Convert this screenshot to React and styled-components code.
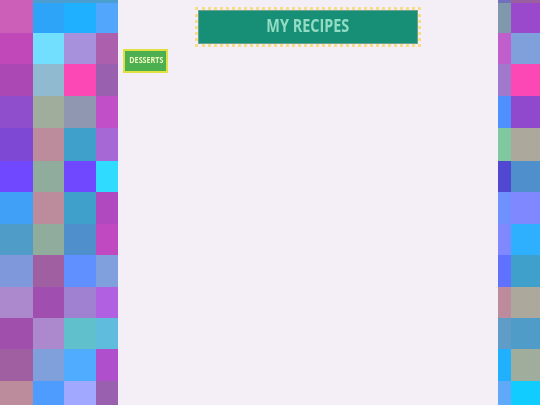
import styled, { createGlobalStyle } from 'styled-components';

const GlobalStyle = createGlobalStyle`
  html, body {
    margin: 0;
    padding: 0;
    background: #f4eff6;
  }
`;

// row heights shared by both side strips
const ROW_HEIGHTS = '3px 30px 31px 32px 32px 33px 31px 32px 31px 32px 31px 31px 32px 24px';

const leftTiles = [
  ['#cc5fb8', '#4a9fd0', '#4a9fd0', '#4a9fd0'],
  ['#cc5fb8', '#2ea4f8', '#1fb0ff', '#52a6fb'],
  ['#c048b8', '#73dfff', '#a791dc', '#ac5fac'],
  ['#ac48b4', '#8fbad0', '#fb48b4', '#9a60b0'],
  ['#8f4fcc', '#a0ac9c', '#9097b0', '#c04fc8'],
  ['#7f48d4', '#bc8c9c', '#3fa0cc', '#a668d4'],
  ['#7048ff', '#8fac9c', '#7048ff', '#2fdcff'],
  ['#40a0f8', '#bc8c9c', '#3fa0cc', '#b048c0'],
  ['#4f9cc8', '#8fac9c', '#4f90cc', '#c048c0'],
  ['#7f98dc', '#a05fa0', '#6090ff', '#7fa0dc'],
  ['#ac88cc', '#a04fb0', '#a080d0', '#b060e0'],
  ['#a04fac', '#ac88cc', '#60c0cc', '#5fbcdc'],
  ['#a05fa0', '#80a0dc', '#50acff', '#b04fcc'],
  ['#bc8c9c', '#4f9cff', '#a0a8ff', '#9a60b0'],
];

const rightTiles = [
  ['#7070bc', '#9a60a0'],
  ['#8098ac', '#9a48cc'],
  ['#c05fcc', '#80a0dc'],
  ['#a078cc', '#fb48b4'],
  ['#4f90ff', '#9048cc'],
  ['#80c8a0', '#aca89c'],
  ['#5048d0', '#4f90cc'],
  ['#6f90ff', '#8088ff'],
  ['#8088ff', '#2fb0ff'],
  ['#6070ff', '#3fa0cc'],
  ['#bc8c9c', '#aca89c'],
  ['#5f9cc8', '#4f9cc8'],
  ['#20b0ff', '#a0ac9c'],
  ['#60a8f8', '#10ccff'],
];

const Page = styled.div`
  display: flex;
  width: 540px;
  height: 405px;
  overflow: hidden;
`;

const Strip = styled.div`
  flex: none;
  width: ${(p) => p.$width}px;
  overflow: hidden;
`;

const TileGrid = styled.div`
  display: grid;
  grid-template-columns: ${(p) => p.$columns};
  grid-template-rows: ${ROW_HEIGHTS};
  height: 405px;
  filter: blur(0.7px);
`;

const Tile = styled.div`
  background: ${(p) => p.$color};
`;

const Content = styled.main`
  flex: 1;
  background: #f4eff6;
  padding: 7px 5px 0;
  box-sizing: border-box;
`;

const Header = styled.header`
  display: flex;
  justify-content: center;
`;

const TitleBox = styled.div`
  width: 226px;
  height: 40px;
  box-sizing: border-box;
  border: 3px dotted #f5de86;
  background: #f4eff6;
`;

const Title = styled.h1`
  margin: 0;
  height: 100%;
  display: flex;
  align-items: center;
  justify-content: center;
  padding-bottom: 5px;
  background: #178f76;
  border: 1px solid #6f9f90;
  box-sizing: border-box;
  color: #93dcc4;
  font-family: 'Open Sans', sans-serif;
  font-size: 18px;
  font-weight: 700;
`;

const TitleText = styled.span`
  display: inline-block;
  transform: scaleX(0.8);
  white-space: nowrap;
`;

const CategoryList = styled.nav`
  display: flex;
  margin-top: 2px;
`;

const CategoryButton = styled.button`
  width: 45px;
  height: 24px;
  padding: 0 0 4px;
  box-sizing: border-box;
  border: 2px solid #e0e040;
  background: #4caf50;
  color: #f2f7c0;
  font-family: 'Open Sans', sans-serif;
  font-size: 9px;
  font-weight: 700;
  white-space: nowrap;
`;

const CategoryText = styled.span`
  display: inline-block;
  transform: scaleX(0.8);
`;

const TileStrip = ({ width, columns, tiles }) => (
  <Strip $width={width}>
    <TileGrid $columns={columns}>
      {tiles.flat().map((color, i) => (
        <Tile key={i} $color={color} />
      ))}
    </TileGrid>
  </Strip>
);

export default function App() {
  return (
    <>
      <GlobalStyle />
      <Page>
        <TileStrip width={118} columns="33px 31px 32px 32px" tiles={leftTiles} />
        <Content>
          <Header>
            <TitleBox>
              <Title>
                <TitleText>MY RECIPES</TitleText>
              </Title>
            </TitleBox>
          </Header>
          <CategoryList>
            <CategoryButton>
              <CategoryText>DESSERTS</CategoryText>
            </CategoryButton>
          </CategoryList>
        </Content>
        <TileStrip width={42} columns="13px 29px" tiles={rightTiles} />
      </Page>
    </>
  );
}
